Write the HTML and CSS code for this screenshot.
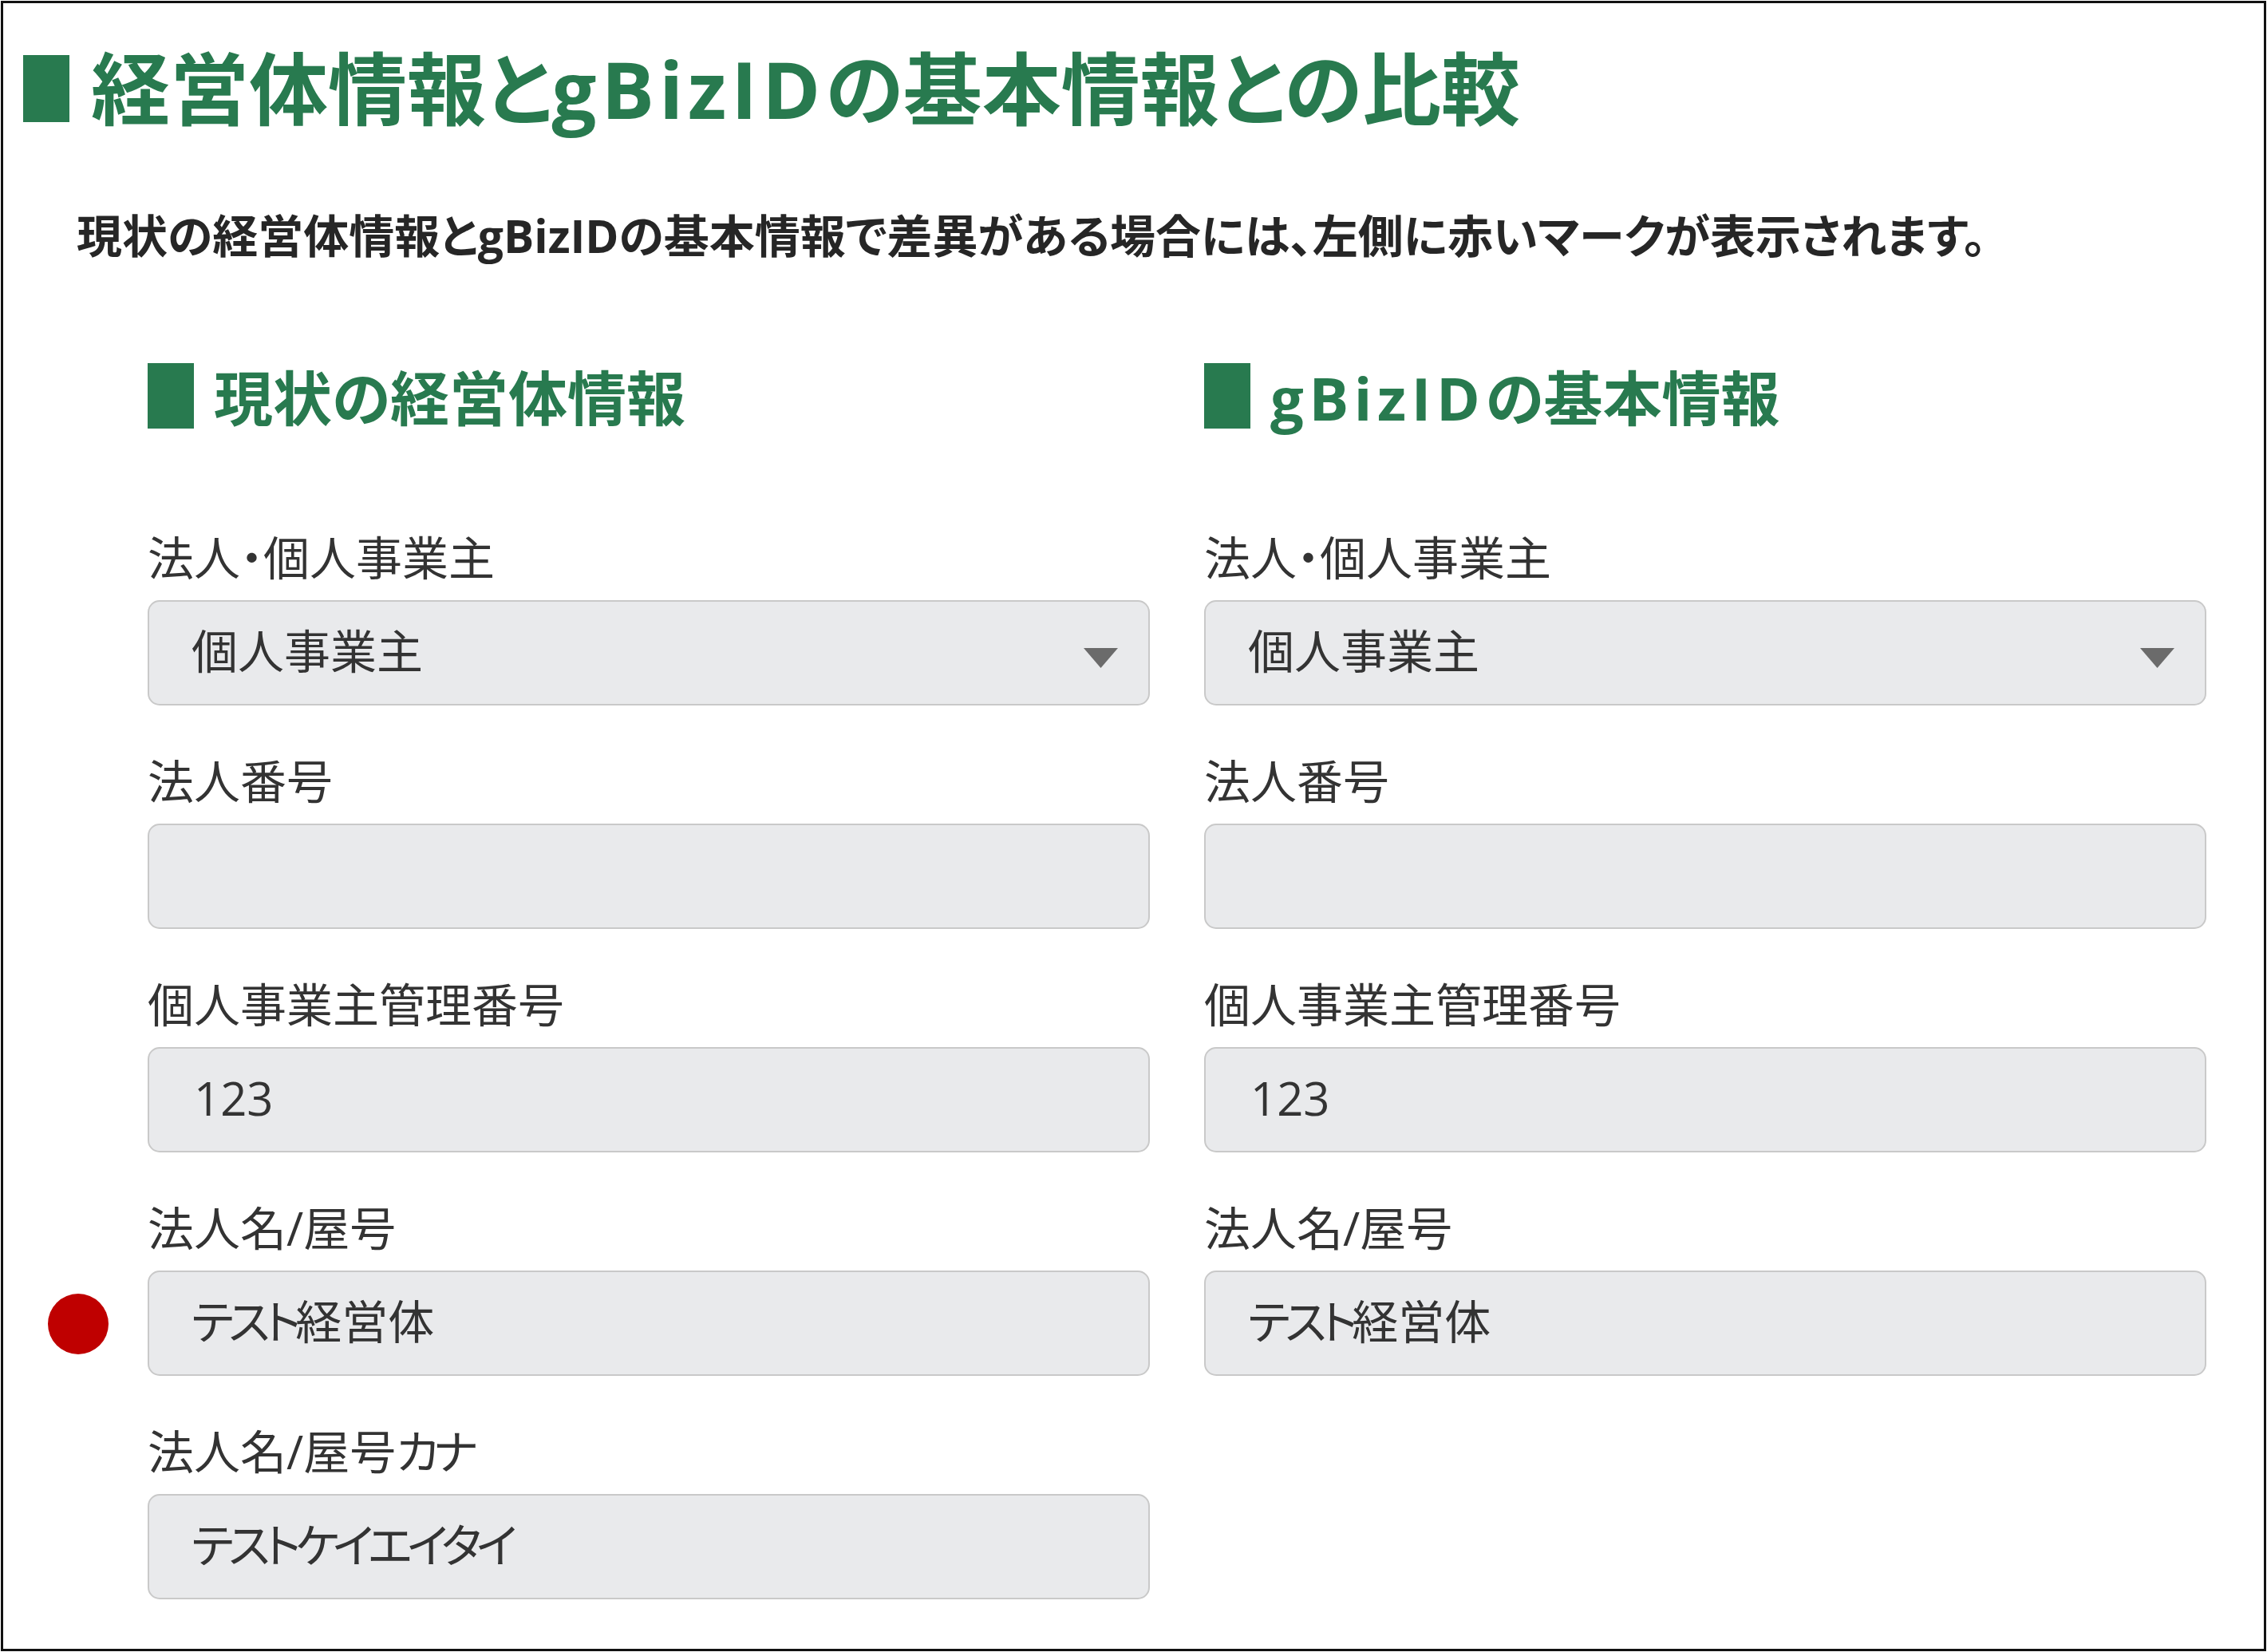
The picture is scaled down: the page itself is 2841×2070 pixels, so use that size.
FILE: index.html
```html
<!DOCTYPE html>
<html lang="ja">
<head>
<meta charset="utf-8">
<title>経営体情報とgBizIDの基本情報との比較</title>
<link rel="stylesheet" href="styles.css">
</head>
<body>
<div class="page">
  <h1 class="title"><span class="mark mark-lg"></span><span class="title-text">経営体情報と<span class="latin">gBizID</span>の基本情報との比較</span></h1>
  <p class="lead">現状の経営体情報と<span class="latin">gBizID</span>の基本情報で差異がある場合には、左側に赤いマークが表示されます。</p>
  <div class="compare">
    <section class="col">
      <h2 class="sub"><span class="mark mark-sm"></span><span class="sub-text">現状の経営体情報</span></h2>
      <div class="field">
        <div class="label">法人・個人事業主</div>
        <div class="box select"><span class="value">個人事業主</span><svg class="caret" viewBox="0 0 43 25" width="43" height="25"><path d="M0 0 H43 L21.5 25 Z" fill="#6b6b6b"/></svg></div>
      </div>
      <div class="field">
        <div class="label">法人番号</div>
        <div class="box"><span class="value"></span></div>
      </div>
      <div class="field">
        <div class="label">個人事業主管理番号</div>
        <div class="box"><span class="value num">123</span></div>
      </div>
      <div class="field diff">
        <div class="label">法人名/屋号</div>
        <div class="box"><span class="value"><span class="kana">テスト</span>経営体</span></div>
      </div>
      <div class="field">
        <div class="label">法人名/屋号<span class="kana">カナ</span></div>
        <div class="box"><span class="value"><span class="kana">テストケイエイタイ</span></span></div>
      </div>
    </section>
    <section class="col">
      <h2 class="sub"><span class="mark mark-sm"></span><span class="sub-text"><span class="latin">gBizID</span>の基本情報</span></h2>
      <div class="field">
        <div class="label">法人・個人事業主</div>
        <div class="box select"><span class="value">個人事業主</span><svg class="caret" viewBox="0 0 43 25" width="43" height="25"><path d="M0 0 H43 L21.5 25 Z" fill="#6b6b6b"/></svg></div>
      </div>
      <div class="field">
        <div class="label">法人番号</div>
        <div class="box"><span class="value"></span></div>
      </div>
      <div class="field">
        <div class="label">個人事業主管理番号</div>
        <div class="box"><span class="value num">123</span></div>
      </div>
      <div class="field">
        <div class="label">法人名/屋号</div>
        <div class="box"><span class="value"><span class="kana">テスト</span>経営体</span></div>
      </div>
    </section>
  </div>
</div>
</body>
</html>
```
FILE: styles.css
```css
* { box-sizing: border-box; }
html, body { margin: 0; padding: 0; background: #fff; }
body {
  font-family: "Open Sans", "Noto Sans CJK JP", sans-serif;
  font-feature-settings: "palt";
  color: #333;
}
.page {
  margin: 1px 0 0 1px;
  width: 2839px;
  height: 2068px;
  border: 3px solid #111;
  overflow: hidden;
}
.mark {
  display: block;
  flex: none;
  background: #287a4f;
}
.latin { letter-spacing: 0.06em; }
.kana { letter-spacing: -0.11em; }
.title {
  display: flex;
  align-items: center;
  margin: 47px 0 0 25px;
  font-size: 99px;
  line-height: 119px;
  font-weight: 700;
  color: #287a4f;
}
.mark-lg {
  width: 58px;
  height: 84px;
  margin: 0 27px 0 0;
}
.lead {
  margin: 83px 0 0 92px;
  font-size: 57px;
  line-height: 85px;
  font-weight: 700;
  color: #262626;
}
.lead .latin { letter-spacing: 0; }
.compare {
  display: grid;
  grid-template-columns: 1256px 1256px;
  column-gap: 68px;
  margin: 113px 0 0 181px;
}
.col {
  display: flex;
  flex-direction: column;
}
.sub {
  display: flex;
  align-items: center;
  margin: 0 0 107px 0;
  font-size: 74px;
  line-height: 96px;
  font-weight: 700;
  color: #287a4f;
}
.sub .latin { letter-spacing: 0.09em; }
.mark-sm {
  width: 58px;
  height: 82px;
  margin: -6px 25px 0 0;
}
.field {
  display: flex;
  flex-direction: column;
  margin-bottom: 50px;
}
.label {
  padding-top: 5px;
  font-size: 58px;
  line-height: 80px;
  color: #333;
  margin-bottom: 13px;
}
.box {
  position: relative;
  display: flex;
  align-items: center;
  height: 132px;
  padding: 0 38px 4px 53px;
  background: #e9eaec;
  border: 2px solid #c9c9c9;
  border-radius: 15px;
  font-size: 58px;
  line-height: 80px;
  color: #333;
}
.select { justify-content: space-between; }
.caret { margin-top: 16px; display: block; }
.value.num { padding-left: 3px; }
.diff .box::before {
  content: "";
  position: absolute;
  left: -127px;
  top: 27px;
  width: 76px;
  height: 76px;
  border-radius: 50%;
  background: #bf0000;
}
```
